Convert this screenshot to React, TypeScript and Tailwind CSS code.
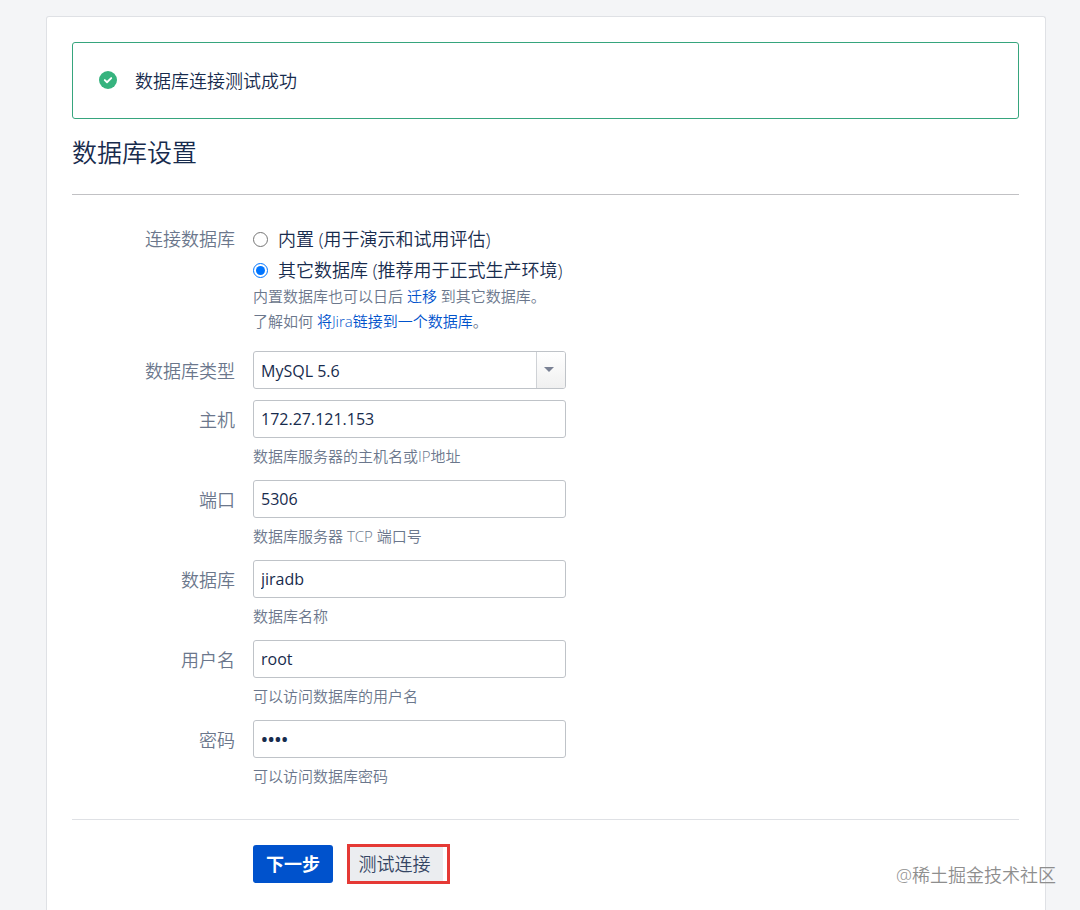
import { useState } from 'react'

interface Field {
  id: string
  label: string
  hint: string
  type: string
  value: string
}

const FIELDS: Field[] = [
  { id: 'host', label: '主机', hint: '数据库服务器的主机名或IP地址', type: 'text', value: '172.27.121.153' },
  { id: 'port', label: '端口', hint: '数据库服务器 TCP 端口号', type: 'text', value: '5306' },
  { id: 'database', label: '数据库', hint: '数据库名称', type: 'text', value: 'jiradb' },
  { id: 'username', label: '用户名', hint: '可以访问数据库的用户名', type: 'text', value: 'root' },
  { id: 'password', label: '密码', hint: '可以访问数据库密码', type: 'password', value: 'root' },
]

function SuccessMessage(): React.JSX.Element {
  return (
    <div role="status" className="flex items-start gap-[18px] rounded-[3px] border border-[#36a57d] px-[26px] pt-[25px] pb-[23px]">
      <svg viewBox="0 0 18 18" className="mt-[3px] size-[18px]" aria-hidden="true">
        <circle cx="9" cy="9" r="9" fill="#36b37e" />
        <path
          d="M5.8 9.1l2.2 2.1 4.2-4.1"
          fill="none"
          stroke="#fff"
          strokeWidth="1.9"
          strokeLinecap="round"
          strokeLinejoin="round"
        />
      </svg>
      <p className="text-lg leading-[27px]">数据库连接测试成功</p>
    </div>
  )
}

function ConnectionChoice(): React.JSX.Element {
  const [mode, setMode] = useState('external')

  return (
    <fieldset className="grid grid-cols-[163px_1fr] gap-x-[18px]">
      <legend className="contents">
        <span className="text-right text-lg leading-7 text-[#6b778c]">连接数据库</span>
      </legend>
      <div>
        <div className="space-y-[3px]">
          <label className="flex h-7 items-center gap-[10px] text-lg">
            <input
              type="radio"
              name="mode"
              className="size-[15px]"
              checked={mode === 'internal'}
              onChange={() => setMode('internal')}
            />
            内置 (用于演示和试用评估)
          </label>
          <label className="flex h-7 items-center gap-[10px] text-lg">
            <input
              type="radio"
              name="mode"
              className="size-[15px]"
              checked={mode === 'external'}
              onChange={() => setMode('external')}
            />
            其它数据库 (推荐用于正式生产环境)
          </label>
        </div>
        <p className="text-[15px] leading-[25px] text-[#6b778c]">
          内置数据库也可以日后 <a href="#migrate" className="text-[#0052cc] hover:underline">迁移</a> 到其它数据库。
        </p>
        <p className="text-[15px] leading-[25px] text-[#6b778c]">
          了解如何 <a href="#connect" className="text-[#0052cc] hover:underline">将Jira链接到一个数据库</a>。
        </p>
      </div>
    </fieldset>
  )
}

function DatabaseType(): React.JSX.Element {
  return (
    <div className="mt-[17px] grid grid-cols-[163px_313px] gap-x-[18px]">
      <label htmlFor="type" className="text-right text-lg leading-10 text-[#6b778c]">
        数据库类型
      </label>
      <div className="relative h-[38px]">
        <select
          id="type"
          defaultValue="mysql56"
          className="h-full w-full appearance-none rounded-[3px] border border-[#bfc3c8] bg-white px-[7px] pt-[2px] text-base font-normal"
        >
          <option value="mysql56">MySQL 5.6</option>
          <option value="mysql57">MySQL 5.7+</option>
          <option value="postgres">PostgreSQL</option>
        </select>
        {/* Drop-down handle drawn over the select */}
        <span className="pointer-events-none absolute inset-y-px right-px flex w-[29px] items-center justify-center rounded-r-[2px] border-l border-[#cfd2d6] bg-linear-to-b from-white to-[#f0f0f0] pr-1 pb-[2px]">
          <svg viewBox="0 0 10 5" className="h-[5px] w-[10px]" aria-hidden="true">
            <path d="M0 0h10L5 5z" fill="#7a8194" />
          </svg>
        </span>
      </div>
    </div>
  )
}

function TextField({ field }: { field: Field }): React.JSX.Element {
  return (
    <div className="grid grid-cols-[163px_313px] gap-x-[18px]">
      <label htmlFor={field.id} className="text-right text-lg leading-10 text-[#6b778c]">
        {field.label}
      </label>
      <div>
        <input
          id={field.id}
          type={field.type}
          defaultValue={field.value}
          aria-describedby={`${field.id}-hint`}
          className={`block h-[38px] w-full rounded-[3px] border border-[#bfc3c8] bg-white px-[7px] ${
            field.type === 'password' ? 'text-lg font-semibold' : 'text-base font-normal'
          }`}
        />
        <p id={`${field.id}-hint`} className="mt-2 text-[15px] leading-5 text-[#6b778c]">
          {field.hint}
        </p>
      </div>
    </div>
  )
}

function App(): React.JSX.Element {
  return (
    <div className="relative flex min-h-screen flex-col bg-[#f4f5f7] pt-4 pr-[34px] pl-[46px] font-['Open_Sans','Noto_Sans_CJK_SC',sans-serif] font-[350] text-[#172b4d]">
      <main className="flex-1 rounded-t-[3px] border border-b-0 border-[#dfe1e5] bg-white pt-[25px] pr-[26px] pb-[26px] pl-[25px]">
        <SuccessMessage />
        <h1 className="mt-[17px] border-b border-[#c1c1c4] pb-[26px] text-[25px] leading-8">数据库设置</h1>

        <form onSubmit={(e) => e.preventDefault()}>
          <div className="pt-[30px]">
            <ConnectionChoice />
            <DatabaseType />
            <div className="mt-[9px] space-y-[14px]">
              {FIELDS.map((field) => (
                <TextField key={field.id} field={field} />
              ))}
            </div>
          </div>

          <div className="mt-[33px] flex items-center gap-[14px] border-t border-[#dfe1e5] pt-6 pl-[181px]">
            <button type="submit" className="h-[38px] w-20 rounded-[3px] bg-[#0052cc] text-lg font-bold text-white">
              下一步
            </button>
            {/* Highlighted action */}
            <div className="border-3 border-[#e53935] bg-white pr-1">
              <button type="button" className="block h-[34px] w-[93px] bg-[#ebedf0] pr-1 text-lg text-[#344563]">
                测试连接
              </button>
            </div>
          </div>
        </form>
      </main>

      <p className="absolute right-6 bottom-[21px] text-lg text-[#8e8e8e]">@稀土掘金技术社区</p>
    </div>
  )
}

export default App
